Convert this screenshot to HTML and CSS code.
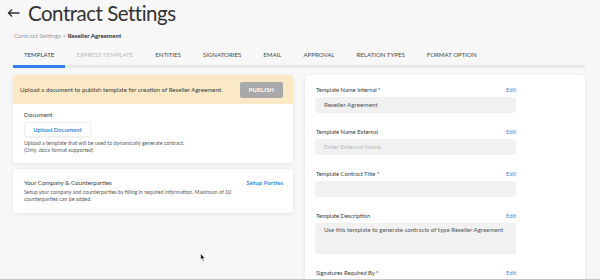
FILE: index.html
```html
<!DOCTYPE html>
<html lang="en">
<head>
    <meta charset="UTF-8">
    <title>Contract Settings</title>
    <link rel="stylesheet" href="styles.css">
</head>
<body>
    <div class="page">
        <header>
            <h1>
                <svg class="back" width="13" height="10" viewBox="0 0 13 10">
                    <path d="M12.5 5H1.5M5 1.5L1.5 5L5 8.5" fill="none" stroke="#333" stroke-width="1.4"/>
                </svg>
                Contract Settings
            </h1>
            <div class="crumbs">Contract Settings &gt; <b>Reseller Agreement</b></div>
        </header>

        <nav class="tabs">
            <span class="tab active">TEMPLATE</span>
            <span class="tab disabled">EXPRESS TEMPLATE</span>
            <span class="tab">ENTITIES</span>
            <span class="tab">SIGNATORIES</span>
            <span class="tab">EMAIL</span>
            <span class="tab">APPROVAL</span>
            <span class="tab">RELATION TYPES</span>
            <span class="tab">FORMAT OPTION</span>
        </nav>

        <div class="columns">
            <div class="left">
                <div class="card">
                    <div class="notice">
                        <span>Upload a document to publish template for creation of Reseller Agreement.</span>
                        <button class="publish">PUBLISH</button>
                    </div>
                    <div class="doc">
                        <div class="doc-label">Document</div>
                        <button class="upload">Upload Document</button>
                        <p class="hint">Upload a template that will be used to dynamically generate contract.<br>(Only .docx format supported)</p>
                    </div>
                </div>

                <div class="card parties">
                    <div class="parties-text">
                        <div class="parties-title">Your Company &amp; Counterparties</div>
                        <p class="hint">Setup your company and counterparties by filling in required information. Maximum of 10 counterparties can be added.</p>
                    </div>
                    <a class="link">Setup Parties</a>
                </div>
            </div>

            <div class="card right">
                <div class="field">
                    <div class="field-head"><span>Template Name Internal *</span><a class="link">Edit</a></div>
                    <div class="input">Reseller Agreement</div>
                </div>
                <div class="field">
                    <div class="field-head"><span>Template Name External</span><a class="link">Edit</a></div>
                    <div class="input placeholder">Enter External Name</div>
                </div>
                <div class="field">
                    <div class="field-head"><span>Template Contract Title *</span><a class="link">Edit</a></div>
                    <div class="input"></div>
                </div>
                <div class="field">
                    <div class="field-head"><span>Template Description</span><a class="link">Edit</a></div>
                    <div class="input textarea">Use this template to generate contracts of type Reseller Agreement</div>
                </div>
                <div class="field">
                    <div class="field-head"><span>Signatures Required By *</span><a class="link">Edit</a></div>
                </div>
            </div>
        </div>
    </div>

    <svg class="cursor" width="6" height="9" viewBox="0 0 6 9">
        <path d="M0.5 0.5V7L2 5.6L3.2 8.2L4.2 7.8L3 5.2H5.2Z" fill="#222" stroke="#fff" stroke-width="0.6"/>
    </svg>
</body>
</html>
```

FILE: styles.css
```css
body {
    margin: 0;
    background-color: #f7f7f7;
    font-family: Lato, 'Open Sans', sans-serif;
    color: #3a3a3a;
    overflow: hidden;
}

.page {
    height: 279px;
    border-bottom: 1px solid #c4c4c4;
    overflow: hidden;
}

header {
    padding-left: 7px;
}

h1 {
    margin: 0;
    font-size: 20.5px;
    font-weight: 400;
    letter-spacing: -0.5px;
    line-height: 26px;
    color: #333;
    display: flex;
    align-items: center;
}

.back {
    margin-right: 8px;
}

.crumbs {
    margin: 6px 0 0 7px;
    font-size: 6.2px;
    line-height: 8px;
    color: #999;
}

.crumbs b {
    color: #333;
}

.tabs {
    display: flex;
    margin: 6px 15px 0 13px;
    border-bottom: 3px solid #e8e8e6;
}

.tab {
    padding: 5px 11px 6px;
    font-size: 6.1px;
    line-height: 8px;
    color: #4a4a4a;
    margin-bottom: -3px;
    border-bottom: 3px solid transparent;
}

.tab.active {
    border-bottom-color: #2f80ed;
    color: #444;
}

.tab.disabled {
    color: #bbb;
}

.columns {
    display: flex;
    gap: 12px;
    margin: 7px 15px 0 13px;
    align-items: flex-start;
}

.left {
    width: 280px;
    display: flex;
    flex-direction: column;
    gap: 6px;
}

.card {
    background-color: #fff;
    border-radius: 3px;
    box-shadow: 0 1px 4px rgba(0, 0, 0, 0.08);
    overflow: hidden;
}

.notice {
    background-color: #fbe9c6;
    display: flex;
    align-items: center;
    justify-content: space-between;
    padding: 6.5px 10px 6.5px 7px;
    font-size: 6.2px;
    color: #3a3a3a;
}

.publish {
    background-color: #a9a9a9;
    color: #fff;
    border: none;
    border-radius: 2px;
    font-family: inherit;
    font-size: 5.8px;
    font-weight: 700;
    letter-spacing: 0.2px;
    width: 43px;
    height: 16px;
    padding: 0;
}

.doc {
    padding: 7px 11px 9px;
}

.doc-label {
    font-size: 6.2px;
    line-height: 8px;
    color: #3a3a3a;
}

.upload {
    display: block;
    margin-top: 3px;
    background-color: #fff;
    border: 1px solid #eee;
    border-radius: 3px;
    box-shadow: 0 1px 2px rgba(0, 0, 0, 0.06);
    color: #3d8ce6;
    font-family: inherit;
    font-size: 6px;
    font-weight: 700;
    width: 67px;
    height: 15px;
    padding: 0;
}

.hint {
    margin: 3px 0 0;
    font-size: 5.3px;
    line-height: 7px;
    color: #5a5a5a;
}

.parties {
    display: flex;
    justify-content: space-between;
    align-items: flex-start;
    padding: 10px 10px 10px 11px;
}

.parties-text {
    width: 212px;
}

.parties-title {
    font-size: 6.2px;
    line-height: 8px;
    color: #3a3a3a;
}

.parties .hint {
    margin-top: 2px;
}

.link {
    color: #3d8ce6;
    font-size: 6.2px;
    line-height: 8px;
    font-weight: 700;
    white-space: nowrap;
}

.right {
    width: 280px;
    height: 230px;
    padding: 11px 0 0 10px;
    box-sizing: border-box;
}

.field {
    width: 201px;
    margin-bottom: 15px;
}

.field-head {
    display: flex;
    justify-content: space-between;
    font-size: 5.8px;
    line-height: 8px;
    color: #3a3a3a;
    padding-left: 1px;
    margin-bottom: 3px;
}

.field-head .link {
    font-weight: 400;
    font-size: 5.8px;
}

.input {
    background-color: #f1f1f1;
    border-radius: 3px;
    height: 16px;
    line-height: 16px;
    padding-left: 9px;
    font-size: 6.3px;
    color: #555;
}

.input.placeholder {
    color: #bbb;
}

.input.textarea {
    height: 31px;
    line-height: 14px;
    font-size: 6.1px;
}

.cursor {
    position: absolute;
    left: 200px;
    top: 253px;
}
```
